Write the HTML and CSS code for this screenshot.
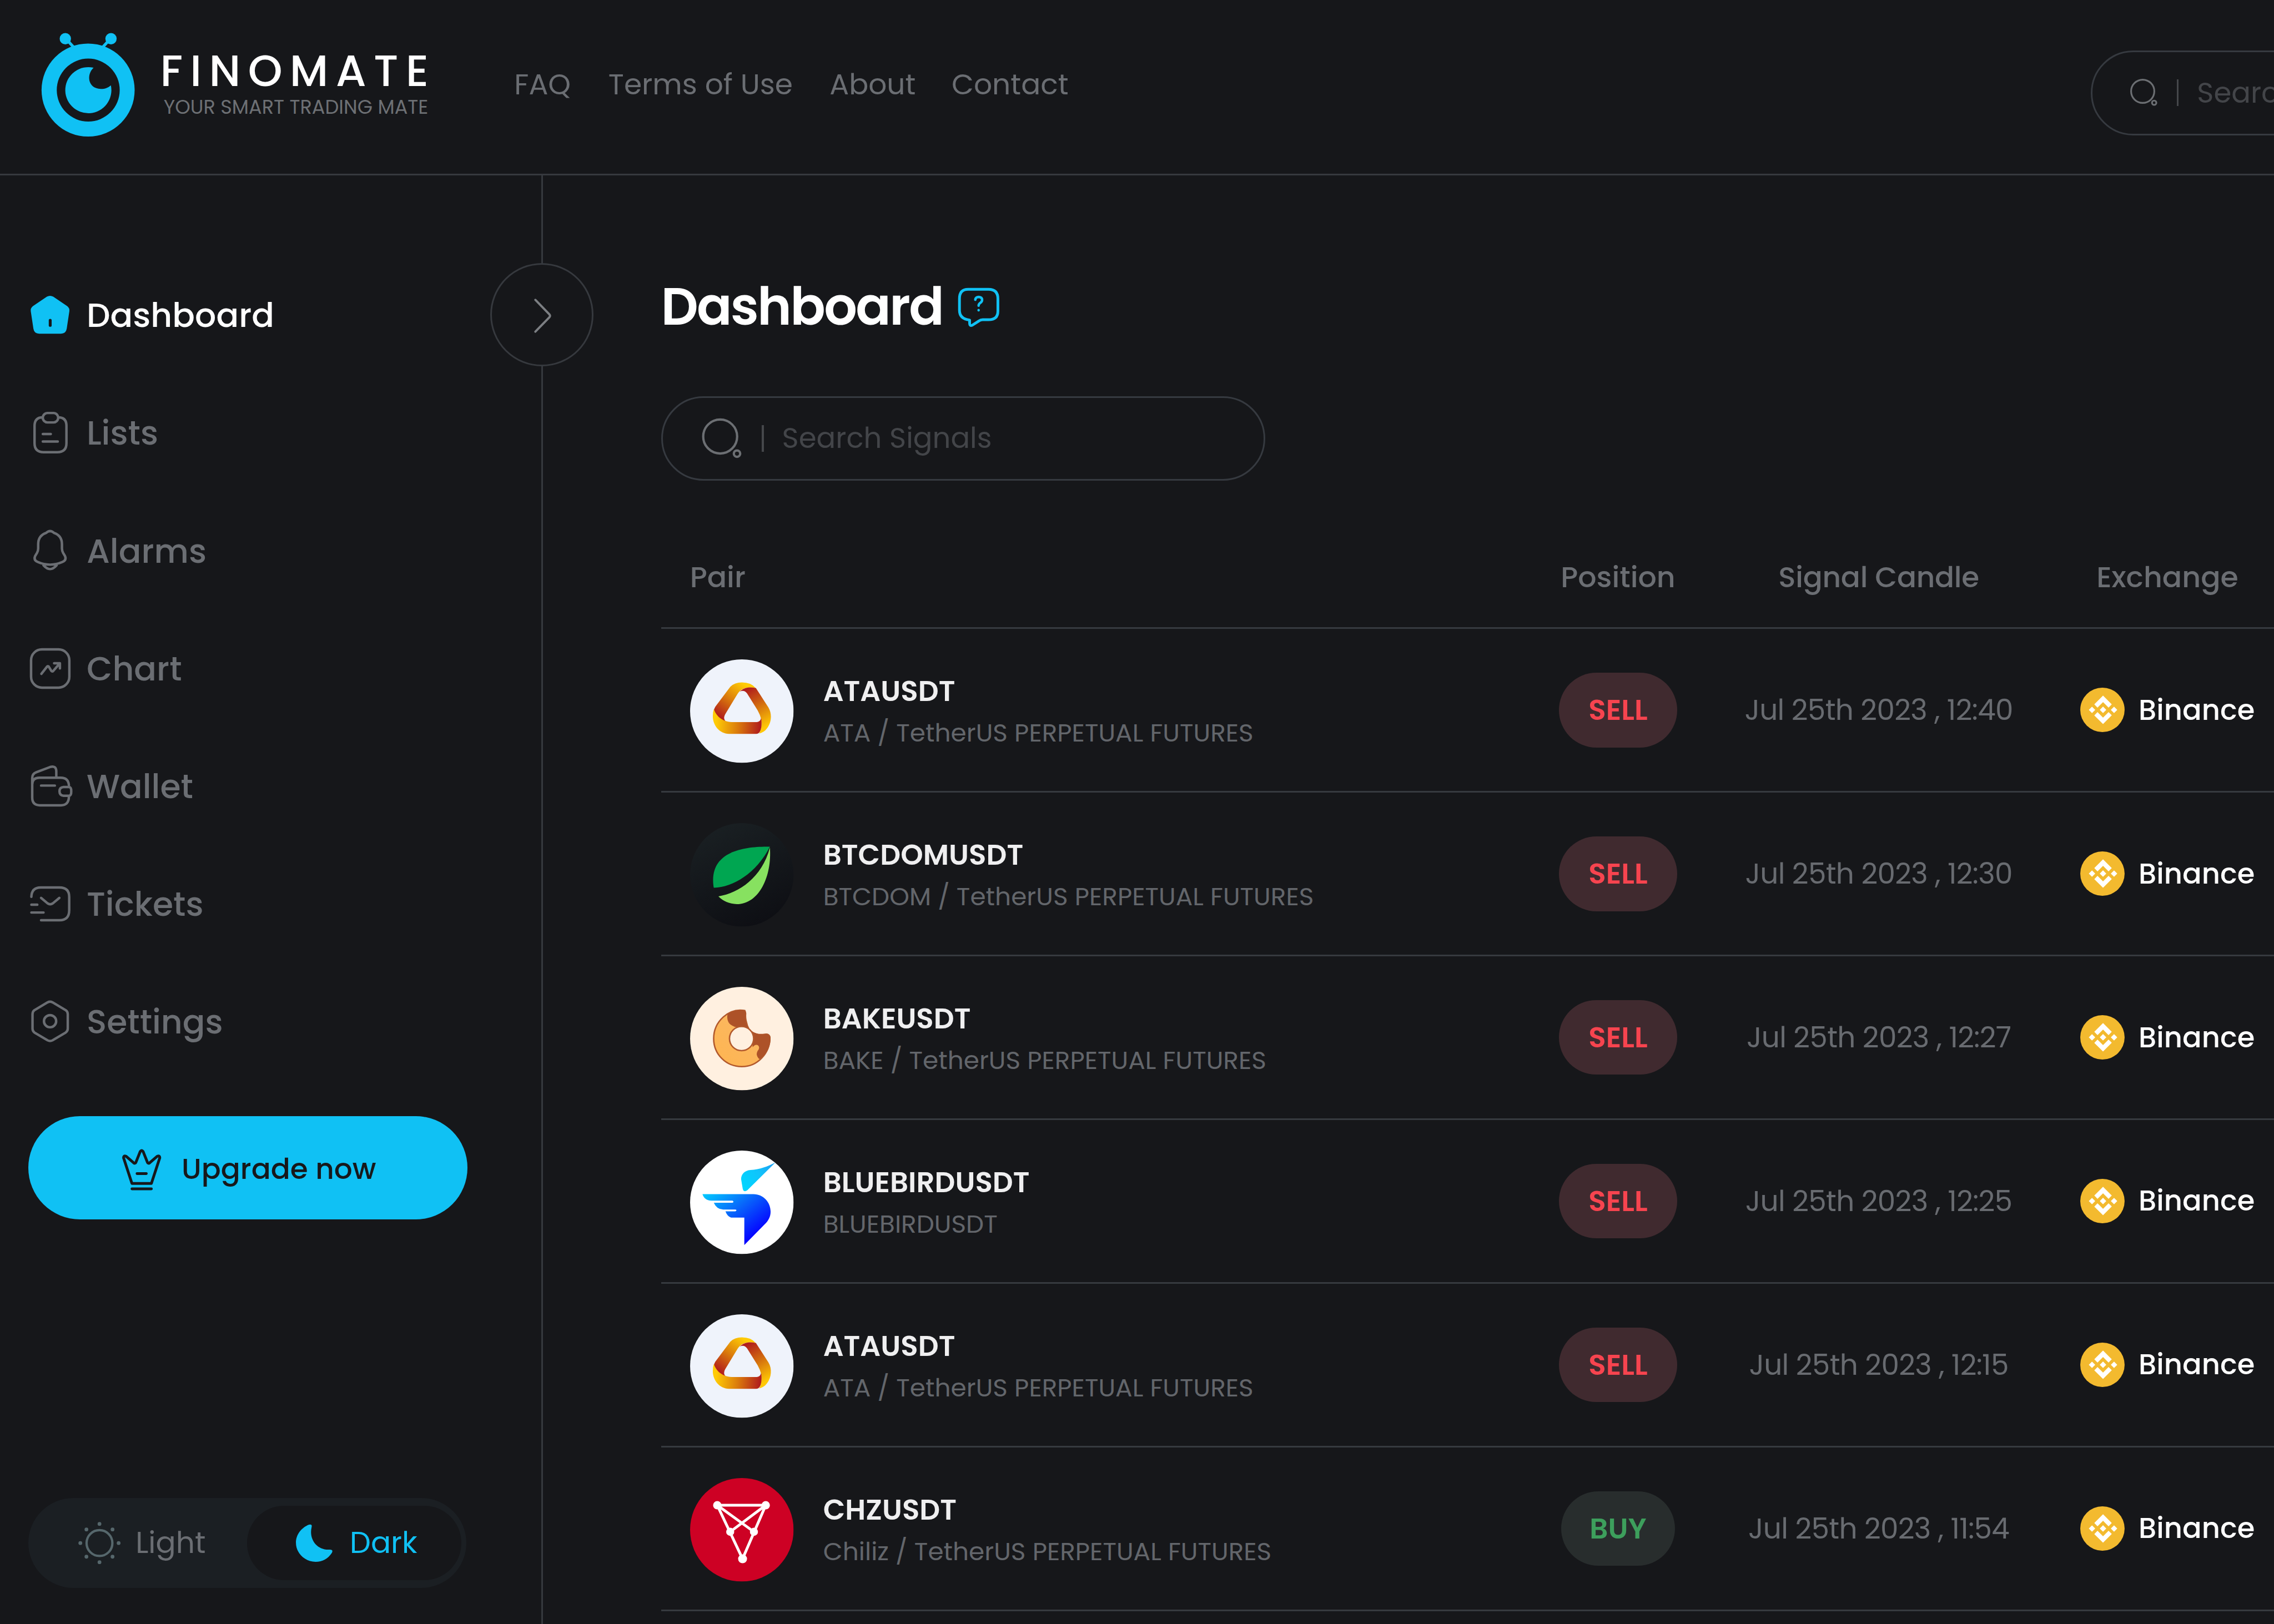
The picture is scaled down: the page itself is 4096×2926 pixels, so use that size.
FILE: index.html
```html
<!DOCTYPE html>
<html lang="en">
<head>
<meta charset="utf-8">
<title>Finomate – Dashboard</title>
<link rel="stylesheet" href="styles.css">
</head>
<body>
<svg class="defs" aria-hidden="true">
  <defs>
    <linearGradient id="ata-a" gradientUnits="userSpaceOnUse" x1="37" y1="17" x2="20" y2="40"><stop offset="0" stop-color="#ffcb05"/><stop offset=".5" stop-color="#da7a0c"/><stop offset="1" stop-color="#b01c1c"/></linearGradient>
    <linearGradient id="ata-b" gradientUnits="userSpaceOnUse" x1="39" y1="21" x2="54" y2="46"><stop offset="0" stop-color="#b01c1c"/><stop offset=".5" stop-color="#d4700e"/><stop offset="1" stop-color="#ffc805"/></linearGradient>
    <linearGradient id="ata-c" gradientUnits="userSpaceOnUse" x1="18" y1="44" x2="49" y2="47"><stop offset="0" stop-color="#ffcb05"/><stop offset=".5" stop-color="#da7a0c"/><stop offset="1" stop-color="#b01c1c"/></linearGradient>
    <linearGradient id="leaf-bg" x1=".2" y1="0" x2=".6" y2="1"><stop offset="0" stop-color="#1a2023"/><stop offset="1" stop-color="#0e0f14"/></linearGradient>
    <linearGradient id="dough" x1="1" y1="0" x2="0" y2="1"><stop offset="0" stop-color="#f8b868"/><stop offset="1" stop-color="#ffb550"/></linearGradient>
    <linearGradient id="bird-head" gradientUnits="userSpaceOnUse" x1="36" y1="24" x2="56" y2="10"><stop offset="0" stop-color="#00d5ff"/><stop offset=".6" stop-color="#10c4fb"/><stop offset="1" stop-color="#1aa6f5"/></linearGradient>
    <linearGradient id="bird-body" gradientUnits="userSpaceOnUse" x1="18" y1="22" x2="46" y2="58"><stop offset="0" stop-color="#00d0ff"/><stop offset=".5" stop-color="#0869fb"/><stop offset="1" stop-color="#0505ff"/></linearGradient>
    <symbol id="coin-ata" viewBox="0 0 72 72">
      <circle cx="36" cy="36" r="36" fill="#eff3fb"/>
      <path fill="url(#ata-a)" d="M45.7 20C41 18.8 36 19.5 33 24L24.4 38.2Q22.800 41 24.600 43C20.500 42 17 39 16.500 36Q16.500 34.700 17.500 33L28 19Q31 16 36 16Q42.500 16 45.700 20Z"/>
      <path fill="url(#ata-b)" d="M34.600 22.500C37 19.600 41.500 18.800 45.800 20L54.500 33.500C57.200 38 56.600 44 53.500 48Q51.500 50.800 48 51.600C49.600 49 49.800 45 49.400 41.500Q48.700 38.500 47 35.500L39.600 23.600Q37.400 21 34.600 22.500Z"/>
      <path fill="url(#ata-c)" d="M16.600 34.500C17.500 38.500 22 43.600 29 43.600H46.500Q48.800 43.400 49.400 40.800C50 44.500 50 51.800 46 51.800H27C20.500 51.800 15.800 46 15.800 39.500Q15.800 36.500 16.600 34.500Z"/>
    </symbol>
    <symbol id="coin-btcdom" viewBox="0 0 72 72">
      <circle cx="36" cy="36" r="36" fill="url(#leaf-bg)"/>
      <path fill="#00a651" d="M55.500 16.400C38 16 16 19.500 16 39.500Q16 43 16.500 45C30 44.500 46 35 55.500 16.400Z"/>
      <path fill="#87e160" d="M55.500 17C57 37 48 56.400 32.500 56.400Q24.500 56 19.700 51C34 48.500 50 38 55.500 17Z"/>
    </symbol>
    <symbol id="coin-bake" viewBox="0 0 72 72">
      <circle cx="36" cy="36" r="36" fill="#fff0e0"/>
      <path fill="url(#dough)" stroke="#b2592d" stroke-width="1" d="M38 16.500C27 14.500 16.400 24 16.400 36C16.400 47 25 55.500 36 55.500C47 55.500 55.500 46 55.500 35.500Q55.300 32.500 52 33C46 34 40.500 32 39.300 25Q38.300 22 38.600 18.500Z"/>
      <path fill="#ad5228" d="M38 16.200C33.500 15.600 29.500 16.800 26 19.200C25.600 21.500 26 24.500 28 26.200Q29.500 27.300 31 27.800L36 29L43 33L43.500 42Q45.500 39.500 47.400 40.800Q48.800 42.500 47 44.500Q45.800 46.700 46.800 48.500Q47.500 50 48.500 50.300C53.500 46.500 56 41.500 56 35.500Q55.500 32 52 32.900C46 33.600 40.500 31 38.900 25Q38.300 22 38.900 18Q38.800 16.500 38 16.200Z"/>
      <circle cx="35.800" cy="36" r="8.400" fill="#fff0e0" stroke="#b2592d" stroke-width="1"/>
    </symbol>
    <symbol id="coin-bluebird" viewBox="0 0 72 72">
      <circle cx="36" cy="36" r="36" fill="#fff"/>
      <path fill="url(#bird-head)" d="M59.300 8.300C54 11 48.500 13.200 42 13.500C38 13.800 35.400 16.500 35.500 20L36.600 26.500Q37.300 29.300 39.800 27.600Z"/>
      <path fill="url(#bird-body)" d="M8.600 30.300H44C51 30.300 56 36 56 42.500C56 46 54.500 48.800 52 51.200L37.700 65.700V46.600H28.500Q26 46 24.600 42.300H31.500Q33 41.300 31.500 41H23Q18.500 41 16.500 36.300H29.500Q30.800 35.600 29.500 34.800H15Q10 34.800 8.600 30.300Z"/>
    </symbol>
    <symbol id="coin-chz" viewBox="0 0 72 72">
      <circle cx="36" cy="36" r="36" fill="#cd0124"/>
      <path fill="none" stroke="#fff" stroke-width="1.900" d="M18.900 18.900H52.600L36.500 56.200ZM18.900 18.900L44.400 37.400M52.600 18.900L27.900 37.400"/>
      <g fill="#fff"><circle cx="18.900" cy="18.900" r="2.900"/><circle cx="52.600" cy="18.900" r="2.900"/><circle cx="27.900" cy="37.400" r="2.800"/><circle cx="44.400" cy="37.400" r="2.800"/><circle cx="36.500" cy="56.200" r="3.100"/></g>
    </symbol>
    <symbol id="binance" viewBox="0 0 30.600 30.600">
      <circle cx="15.300" cy="15.300" r="15.300" fill="#f3ba2f"/>
      <path transform="translate(5.900 5.500) scale(.155)" fill="#fff" d="M38.730 53.200 63.310 28.630l24.600 24.590 14.300-14.300L63.310 0 24.430 38.900zM0 63.310 14.300 49l14.300 14.300-14.300 14.300zM38.730 73.410 63.310 98l24.600-24.600 14.310 14.290L63.310 126.610 24.430 87.730zM98 63.310l14.300-14.300 14.310 14.300-14.310 14.300zM77.830 63.300 63.310 48.780 48.790 63.300l14.520 14.530z"/>
    </symbol>
  </defs>
</svg>

<header class="topbar">
  <a class="brand">
    <svg class="brand-mark" viewBox="28 22 66 73">
      <g fill="#10c1f4"><circle cx="60.800" cy="62.300" r="32.100"/><circle cx="45.100" cy="26.900" r="3.900"/><circle cx="76.600" cy="26.900" r="3.900"/></g>
      <path d="M46.500 28L52 34M75.200 28L69.700 34" stroke="#10c1f4" stroke-width="2"/>
      <circle cx="60.900" cy="62.300" r="21.700" fill="#16171a"/>
      <path fill="#10c1f4" d="M64.600 46.900A15.900 15.900 0 1 0 76.500 59C74.500 60.800 72 61.600 69.500 61.500C60.500 61.300 59.500 51.500 64.600 46.900Z"/>
    </svg>
    <span class="brand-text"><span class="brand-name">FINOMATE</span><span class="brand-tag">YOUR SMART TRADING MATE</span></span>
  </a>
  <nav class="topnav"><a>FAQ</a><a>Terms of Use</a><a>About</a><a>Contact</a></nav>
  <div class="search search-top">
    <svg class="search-icon" viewBox="0 0 20 20"><circle cx="9" cy="9" r="8" /><circle cx="16.900" cy="16.900" r="1.500"/></svg>
    <i class="caret"></i><span class="ph">Search</span>
  </div>
</header>

<div class="body">
  <aside class="sidebar">
    <ul class="menu">
      <li class="active"><svg viewBox="0 0 30 30"><path fill="#10c1f4" d="M12.800 2.500Q15 1.300 17.200 2.500L26.800 9Q28.600 10.400 28.300 12.500L26.500 24.500Q26 28 22.500 28H7.500Q4 28 3.500 24.500L1.700 12.500Q1.400 10.400 3.200 9Z"/><path stroke="#16171a" stroke-width="2" stroke-linecap="round" d="M15.100 18.800V22.300"/></svg><span>Dashboard</span></li>
      <li><svg viewBox="0 0 30 30"><g fill="none" stroke="currentColor" stroke-width="1.700" stroke-linecap="round"><rect x="10" y="1.200" width="10.600" height="6.500" rx="3.200"/><path d="M9.800 4.200Q4.300 4.200 4.300 10V22Q4.300 28.200 10.500 28.200H20Q26.300 28.200 26.300 22V10Q26.300 4.200 20.800 4.200M10 15.700H15.500M10 20.900H20.300"/></g></svg><span>Lists</span></li>
      <li><svg viewBox="0 0 30 30"><g fill="none" stroke="currentColor" stroke-width="1.700" stroke-linecap="round" stroke-linejoin="round"><path d="M12.300 2.700C8.500 4 6.800 7 6.800 10.500V13.500Q6.800 15 6 16.500L4.700 18.700Q3.500 21.500 6.500 22.800Q15 26.500 23.500 22.800Q26.500 21.500 25.300 18.700L24 16.500Q23.200 15 23.200 13.500V10.500C23.200 7 21.500 4 17.700 2.700Q15 .300 12.300 2.700ZM10.500 25.100Q15 30.300 19.500 25.100"/></g></svg><span>Alarms</span></li>
      <li><svg viewBox="0 0 30 30"><g fill="none" stroke="currentColor" stroke-width="1.700" stroke-linecap="round" stroke-linejoin="round"><rect x="1.900" y="1.900" width="26.400" height="26.400" rx="7.500"/><path d="M9 18.800L12.900 13.800Q13.500 13.100 14.100 13.800L15.900 16.800Q16.500 17.500 17.200 16.800L21.500 11.800M17.800 11.500H21.800V15"/></g></svg><span>Chart</span></li>
      <li><svg viewBox="0 0 30 30"><g fill="none" stroke="currentColor" stroke-width="1.700" stroke-linecap="round" stroke-linejoin="round"><path d="M28 14.500V14.300Q27.400 9.300 22.500 9.300H7.500Q2.700 9.300 2.700 14V23Q2.700 28.300 8 28.300H22.500Q27.800 28.300 28 22.500M2.700 14V9.500Q2.700 6.500 5.500 5.500L15 1.900Q19.300.700 19.300 5V9.200M8.800 14.700H18.300M28.200 15.700H24.300Q21.500 15.900 21.500 18.700Q21.500 21.500 24.300 21.700H28.200Q29.700 21.500 29.600 18.700Q29.700 15.900 28.200 15.700Z"/></g></svg><span>Wallet</span></li>
      <li><svg viewBox="0 0 30 30"><g fill="none" stroke="currentColor" stroke-width="1.700" stroke-linecap="round" stroke-linejoin="round"><path d="M2.100 10.300Q2.300 3.800 8.500 3.800H21.500Q28.200 3.800 28.200 10.300V19.500Q28.200 26.400 21.500 26.400H8.800M2.100 15.700H6.200M2.100 21.100H10.500M8.800 11L13.300 14.800Q15.100 16 16.900 14.800L21.400 11"/></g></svg><span>Tickets</span></li>
      <li><svg viewBox="0 0 30 30"><g fill="none" stroke="currentColor" stroke-width="1.700" stroke-linejoin="round"><path d="M13.300 1.900Q15 1 16.700 1.900L25.800 7.300Q27.200 8.300 27.200 10V20Q27.200 21.700 25.800 22.700L16.700 28.100Q15 29 13.300 28.100L4.200 22.700Q2.900 21.700 2.900 20V10Q2.900 8.300 4.200 7.300Z"/><circle cx="15" cy="14.900" r="4.200"/></g></svg><span>Settings</span></li>
    </ul>
    <button class="upgrade"><svg viewBox="0 0 30 30"><path fill="none" stroke="currentColor" stroke-width="1.900" stroke-linecap="round" stroke-linejoin="round" d="M8.300 25H21.700L27.500 7.300Q27.500 5.500 25.800 6.200L20.500 10.800Q19.600 11.500 19 10.500L16.100 3.200Q15 1.300 13.900 3.200L11 10.500Q10.400 11.500 9.500 10.800L4.200 6.200Q2.500 5.500 2.500 7.300ZM8.300 28.700H21.700M11.800 18.200H18.200"/></svg><span>Upgrade now</span></button>
    <div class="theme">
      <span class="theme-light"><svg viewBox="0 0 30 30"><circle cx="15" cy="15" r="8.900" fill="none" stroke="#56676c" stroke-width="1.600"/><g fill="#56676c"><circle cx="15" cy="1.800" r="1.300"/><circle cx="15" cy="28.200" r="1.300"/><circle cx="1.800" cy="15" r="1.300"/><circle cx="28.200" cy="15" r="1.300"/><circle cx="6" cy="5.600" r="1.300"/><circle cx="24" cy="5.600" r="1.300"/><circle cx="6" cy="24.400" r="1.300"/><circle cx="24" cy="24.400" r="1.300"/></g></svg><span>Light</span></span>
      <span class="theme-dark"><svg viewBox="0 0 26 26"><path fill="#10c1f4" d="M9.400.400Q11.800-.300 11.200 2.200C9.300 10 14.500 18.200 23.800 17.600Q26.300 17.600 25.200 19.800C22.500 24 18.500 26 14 26C6.500 26 .400 20 .400 12.800C.400 7.500 4 2.500 9.400.400Z"/></svg><span>Dark</span></span>
    </div>
    <button class="collapse" aria-label="Expand menu"><svg viewBox="0 0 14 26"><path fill="none" stroke="#7c7f83" stroke-width="1.500" stroke-linecap="round" stroke-linejoin="round" d="M2 2L11.800 12.100Q12.500 13 11.800 13.900L2 24"/></svg></button>
  </aside>

  <main class="content">
    <h1 class="title"><span>Dashboard</span><svg viewBox="0 0 30 28"><g fill="none" stroke="#10c1f4" stroke-width="1.900" stroke-linecap="round" stroke-linejoin="round"><path d="M8 2H22Q28.500 2 28.500 8.500V17Q28.500 23 22 23H18Q16.500 23 15.500 23.800L10.800 26.800Q9 27.500 9 25.500V23.200Q2 22.500 2 16.500V8.500Q2 2 8 2Z"/><path stroke-width="1.700" d="M12.900 9.200Q13.200 7.300 15.300 7.300Q17.700 7.500 17.600 9.500Q17.600 10.600 16.300 11.400Q15.200 12.200 15.200 13.300M15.200 16.400V16.500"/></g></svg></h1>
    <div class="search search-main">
      <svg class="search-icon" viewBox="0 0 30 30"><circle cx="13.100" cy="13.200" r="11.700"/><circle cx="24.700" cy="25" r="2.200"/></svg>
      <i class="caret"></i><span class="ph">Search Signals</span>
    </div>
    <div class="table">
      <div class="row head"><span class="pair">Pair</span><span class="pos">Position</span><span class="candle">Signal Candle</span><span class="exch">Exchange</span></div>
      <div class="row"><div class="pair"><svg class="coin"><use href="#coin-ata"/></svg><p><b>ATAUSDT</b><small>ATA / TetherUS PERPETUAL FUTURES</small></p></div><div class="pos"><span class="pill sell">SELL</span></div><div class="candle">Jul 25th 2023 , 12:40</div><div class="exch"><svg><use href="#binance"/></svg><span>Binance</span></div></div>
      <div class="row"><div class="pair"><svg class="coin"><use href="#coin-btcdom"/></svg><p><b>BTCDOMUSDT</b><small>BTCDOM / TetherUS PERPETUAL FUTURES</small></p></div><div class="pos"><span class="pill sell">SELL</span></div><div class="candle">Jul 25th 2023 , 12:30</div><div class="exch"><svg><use href="#binance"/></svg><span>Binance</span></div></div>
      <div class="row"><div class="pair"><svg class="coin"><use href="#coin-bake"/></svg><p><b>BAKEUSDT</b><small>BAKE / TetherUS PERPETUAL FUTURES</small></p></div><div class="pos"><span class="pill sell">SELL</span></div><div class="candle">Jul 25th 2023 , 12:27</div><div class="exch"><svg><use href="#binance"/></svg><span>Binance</span></div></div>
      <div class="row"><div class="pair"><svg class="coin"><use href="#coin-bluebird"/></svg><p><b>BLUEBIRDUSDT</b><small>BLUEBIRDUSDT</small></p></div><div class="pos"><span class="pill sell">SELL</span></div><div class="candle">Jul 25th 2023 , 12:25</div><div class="exch"><svg><use href="#binance"/></svg><span>Binance</span></div></div>
      <div class="row"><div class="pair"><svg class="coin"><use href="#coin-ata"/></svg><p><b>ATAUSDT</b><small>ATA / TetherUS PERPETUAL FUTURES</small></p></div><div class="pos"><span class="pill sell">SELL</span></div><div class="candle">Jul 25th 2023 , 12:15</div><div class="exch"><svg><use href="#binance"/></svg><span>Binance</span></div></div>
      <div class="row"><div class="pair"><svg class="coin"><use href="#coin-chz"/></svg><p><b>CHZUSDT</b><small>Chiliz / TetherUS PERPETUAL FUTURES</small></p></div><div class="pos"><span class="pill buy">BUY</span></div><div class="candle">Jul 25th 2023 , 11:54</div><div class="exch"><svg><use href="#binance"/></svg><span>Binance</span></div></div>
    </div>
  </main>
</div>
</body>
</html>
```
FILE: styles.css
```css
/* One rem is 1/156.8 of the window width, so the whole page scales with it. */
html { font-size: calc(100vw / 156.8); }
* { box-sizing: border-box; margin: 0; padding: 0; }
body {
  height: 100vh; overflow: hidden; display: flex; flex-direction: column;
  background: #16171a; color: #6b6e73;
  font-family: Poppins, Inter, "Noto Sans", sans-serif;
  font-size: 1.98rem; font-weight: 500; line-height: 1.2;
  white-space: nowrap;
}
svg { display: block; flex: none; overflow: visible; }
.defs { position: absolute; width: 0; height: 0; }
button { font: inherit; border: 0; }

.topbar { flex: none; height: 12.1rem; display: flex; border-bottom: .14rem solid #36393e; overflow: hidden; }
.brand { display: flex; width: 35.46rem; padding: 2.2rem 0 0 2.8rem; flex: none; }
.brand-mark { width: 6.6rem; height: 7.3rem; }
.brand-text { display: flex; flex-direction: column; padding: 1.02rem 0 0 1.64rem; }
.brand-name { font-size: 3.02rem; line-height: 3.4rem; font-weight: 500; letter-spacing: .51rem; color: #fff; }
.brand-tag { font-size: 1.345rem; line-height: 1.52rem; font-weight: 400; color: #6d7074; margin-left: .24rem; }
.topnav { display: flex; height: 11.62rem; align-items: center; flex: none; font-size: 1.985rem; font-weight: 400; }
.topnav a:nth-child(1) { width: 6.49rem; }
.topnav a:nth-child(2) { width: 15.25rem; }
.topnav a:nth-child(3) { width: 8.41rem; }
.topnav a:nth-child(4) { width: 9rem; }

.search { display: flex; align-items: center; border: .14rem solid #363a40; border-radius: 3rem; color: #434549; font-size: 1.965rem; font-weight: 400; }
.search-icon { fill: none; stroke: #6c6f73; }
.search-top { flex: none; width: 41.7rem; height: 5.85rem; margin: 3.48rem 0 0 69.54rem; padding-left: 2.6rem; }
.search-top .search-icon { width: 2rem; height: 2rem; stroke-width: 1.2; }
.search-top .caret { margin-left: 1.22rem; }
.caret { width: .15rem; height: 1.85rem; background: #45474b; margin-right: 1.26rem; }
.search-main { width: 41.65rem; height: 5.85rem; margin-top: 3.97rem; padding-left: 2.65rem; }
.search-main .search-icon { width: 3rem; height: 3rem; stroke-width: 1.6; margin-top: .1rem; }
.search-main .caret { margin-left: 1.15rem; }

.body { flex: 1; display: flex; min-height: 0; }
.sidebar { position: relative; flex: none; width: 37.45rem; border-right: .14rem solid #36393e; padding: 5.6rem 0 0 1.95rem; display: flex; flex-direction: column; align-items: flex-start; }
.menu { list-style: none; font-size: 2.3rem; }
.menu li { height: 8.12rem; display: flex; align-items: center; gap: 1.02rem; }
.menu svg { width: 3rem; height: 3rem; margin-top: -.06rem; }
.menu .active { color: #fff; }
.upgrade { width: 30.28rem; height: 7.12rem; margin-top: 2.45rem; border-radius: 3.6rem; background: #10c1f4; color: #17181b; display: flex; align-items: center; padding: .14rem 0 0 6.3rem; gap: 1.27rem; }
.upgrade svg { width: 3rem; height: 3rem; }
.theme { width: 30.2rem; height: 6.23rem; margin-top: 19.2rem; border-radius: 3.2rem; background: #1b1f23; display: flex; align-items: center; font-size: 2.05rem; font-weight: 400; }
.theme-light { display: flex; align-items: center; width: 15.1rem; padding-left: 3.4rem; gap: 1rem; }
.theme-light svg { width: 3rem; height: 3rem; }
.theme-dark { display: flex; align-items: center; width: 14.75rem; height: 5.1rem; border-radius: 2.6rem; background: #16171a; color: #10c1f4; padding-left: 3.3rem; gap: 1.17rem; }
.theme-dark svg { width: 2.6rem; height: 2.6rem; }
/* The round handle sits over the sidebar's edge. */
.collapse { position: absolute; top: 6.03rem; right: -3.6rem; width: 7.12rem; height: 7.12rem; border: .14rem solid #36393e; border-radius: 50%; background: #16171a; display: flex; align-items: center; justify-content: center; }
.collapse svg { width: 1.4rem; height: 2.6rem; margin-top: .15rem; margin-left: .1rem; }

.content { flex: 1; min-width: 0; overflow: hidden; padding: 6.9rem 0 0 8.15rem; }
.title { display: flex; align-items: center; height: 4.35rem; font-size: 3.59rem; font-weight: 600; color: #fff; letter-spacing: -.105rem; margin-left: -.03rem; }
.title span { width: 20.4rem; }
.title svg { width: 3rem; height: 2.8rem; margin-top: -.05rem; }

.table { width: 113.5rem; }
.row { display: grid; grid-template-columns: 58.4rem 15.14rem 20.72rem 19.18rem; height: 11.29rem; border-bottom: .14rem solid #363a3f; align-items: center; }
.row > * { display: flex; align-items: center; justify-content: center; }
.row .pair { justify-content: flex-start; padding-left: 1.97rem; }
.head { height: 10.22rem; padding-top: 3.2rem; font-size: 2rem; }
.coin { width: 7.14rem; height: 7.14rem; margin-right: 2.05rem; margin-top: .14rem; }
.pair p { display: flex; flex-direction: column; padding-top: .3rem; }
.pair b { font-weight: 600; font-size: 1.975rem; color: #efeff0; line-height: 2.88rem; }
.pair small { font-size: 1.739rem; font-weight: 400; line-height: 2.88rem; color: #63666b; }
.pill { height: 5.15rem; border-radius: 2.6rem; display: flex; align-items: center; justify-content: center; font-weight: 600; }
.sell { width: 8.15rem; background: #402a2f; color: #f7444f; }
.buy { width: 7.88rem; background: #282d2d; color: #3d9f5c; }
.candle { font-size: 1.98rem; font-weight: 400; letter-spacing: -.026rem; color: #686b70; padding-left: .1rem; }
.head .candle { font-weight: 500; letter-spacing: -.01rem; color: inherit; }
.exch { color: #fff; gap: .98rem; font-size: 1.96rem; }
.head .exch { color: inherit; font-size: 2rem; }
.exch svg { width: 3.06rem; height: 3.06rem; }
```
